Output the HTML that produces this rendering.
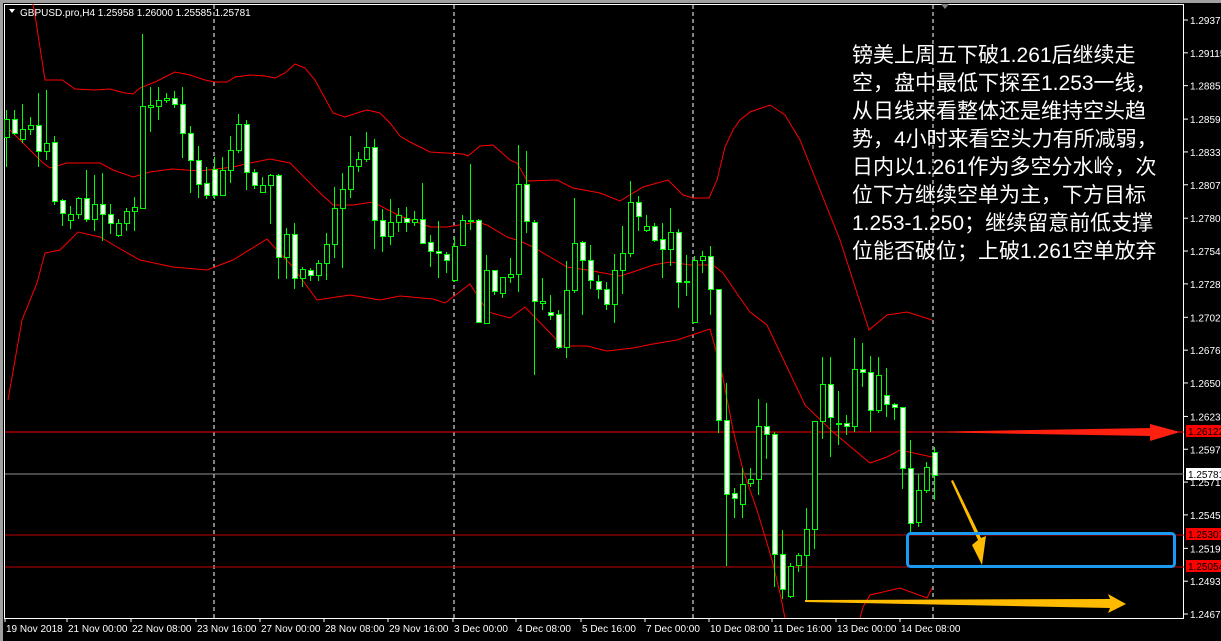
<!DOCTYPE html>
<html><head><meta charset="utf-8"><style>
html,body{margin:0;padding:0;background:#000;width:1221px;height:641px;overflow:hidden}
svg{display:block}
.ax{font-family:"Liberation Sans",sans-serif;font-size:10px;fill:#fff}
.cn{font-family:"Liberation Sans","Noto Sans CJK SC",sans-serif;font-size:21px;fill:#fff}
</style></head><body>
<svg id="s" width="1221" height="641" xmlns="http://www.w3.org/2000/svg">
<rect x="0" y="0" width="1221" height="641" fill="#000"/>
<rect x="0" y="0" width="1221" height="3" fill="#a0a0a0"/>
<rect x="0" y="0" width="3" height="641" fill="#a0a0a0"/>
<rect x="4.5" y="4.5" width="1179" height="614" fill="none" stroke="#fff" stroke-width="1"/>
<g stroke="#fff" stroke-dasharray="4,3" stroke-width="1">
<line x1="214" y1="5" x2="214" y2="618"/><line x1="454" y1="5" x2="454" y2="618"/>
<line x1="693" y1="5" x2="693" y2="618"/><line x1="933" y1="5" x2="933" y2="618"/>
</g>
<path d="M941 4 L949 4 L945 9 Z" fill="#808080"/>
<line x1="5" y1="474" x2="1184" y2="474" stroke="#909090"/>
<line x1="5" y1="535" x2="1184" y2="535" stroke="#c00000"/>
<line x1="5" y1="567" x2="1184" y2="567" stroke="#c00000"/>
<line x1="5" y1="432" x2="1184" y2="432" stroke="#ff0000"/>
<g fill="none" stroke="#ff0000" stroke-width="1">
<polyline points="33,4 35,15 45,80 58,80 62,80 75,89 95,90 110,89 125,93 133,94 140,88 155,82 175,72 190,75 205,80 215,82 227,82 235,77 250,75 265,76 275,78 285,73 295,64 305,68 315,80 333,113 345,117 360,112 367,110 380,113 390,123 400,136 410,142 430,152 463,154 468,156 480,146 493,145 510,160 517,163 525,177 527,181 557,180 573,188 600,193 620,201 643,187 668,180 683,195 693,198 709,198 717,180 725,147 733,130 740,120 750,112 770,105 785,115 800,140 820,190 840,240 869,330 887,315 907,312 932,320"/>
<polyline points="5,125 20,140 43,163 50,168 67,163 100,163 113,170 133,177 150,172 172,169 200,171 233,167 250,163 270,159 290,163 317,190 333,205 353,205 373,202 400,216 430,227 447,227 477,222 487,225 507,237 520,241 533,247 550,257 567,267 587,270 620,276 633,272 653,265 670,262 690,265 713,265 723,273 740,298 750,312 767,325 805,405 833,432 870,463 887,457 900,450 932,457"/>
<polyline points="8,400 22,320 37,283 45,253 60,250 78,232 100,237 117,247 140,260 173,267 207,270 233,260 267,239 277,250 293,267 317,300 350,295 380,300 400,296 433,299 445,303 470,284 488,312 510,318 525,307 555,338 560,346 587,346 607,351 633,348 653,344 677,340 710,329 715,347 722,373 733,430 743,470 757,510 772,560 780,593 785,618"/>
<polyline points="860,618 863,607 870,595 900,588 927,598 932,588"/>
</g>
<g id="c"></g>
<!-- arrows -->
<path d="M916 432 L1150 428 L1150 424 L1180 432 L1150 441 L1150 436 Z" fill="#ff2010"/>
<path d="M805 600 L1110 599 L1108 594 L1126 604 L1108 613 L1110 608 L805 602 Z" fill="#ffbb00"/>
<path d="M951 481 L978 540 L972 545 L982 565 L986 536 L981 538 L953 480 Z" fill="#ffbb00"/>
<rect x="907.5" y="533.5" width="267" height="33" rx="3" fill="none" stroke="#1a9af0" stroke-width="3"/>
<!-- title -->
<path d="M9 9 L15 9 L12 13 Z" fill="#fff"/>
<text x="20" y="16" class="ax">GBPUSD.pro,H4  1.25958 1.26000 1.25585 1.25781</text>
<!-- chinese -->
<g class="cn">
<text x="852" y="62">镑美上周五下破1.261后继续走</text>
<text x="852" y="90">空，盘中最低下探至1.253一线，</text>
<text x="852" y="118">从日线来看整体还是维持空头趋</text>
<text x="852" y="146">势，4小时来看空头力有所减弱，</text>
<text x="852" y="174">日内以1.261作为多空分水岭，次</text>
<text x="852" y="202">位下方继续空单为主，下方目标</text>
<text x="852" y="230">1.253-1.250；继续留意前低支撑</text>
<text x="852" y="258">位能否破位；上破1.261空单放弃</text>
</g>
<g id="ya" class="ax"></g>
<g id="xa" class="ax"></g>
</svg>
<script>
var NS="http://www.w3.org/2000/svg";
function el(t,a,p){var e=document.createElementNS(NS,t);for(var k in a)e.setAttribute(k,a[k]);p.appendChild(e);return e;}
var d="119,137,110,167,h|119,133,110,135,w|129,139,104,143,h|125,129,117,135,h|125,151,93,167,w|143,151,90,160,h|142,201,136,205,w|200,213,199,226,w|214,220,206,229,h|198,214,197,219,h|198,219,170,222,w|204,219,175,231,h|204,214,173,241,w|214,223,204,234,w|223,235,219,237,h|211,223,208,231,h|207,211,197,231,h|106,208,34,208,h|105,107,87,132,h|100,106,87,120,h|98,100,93,103,h|98,104,91,108,w|104,133,87,158,w|133,160,126,193,w|160,184,146,198,w|183,195,167,199,w|169,195,157,199,w|170,195,157,195,h|150,170,136,183,h|124,150,114,153,h|124,172,120,190,w|172,185,169,189,w|185,192,177,192,h|175,185,174,224,h|175,257,174,279,w|234,257,228,279,h|234,278,223,289,w|269,278,267,287,h|270,275,268,281,w|263,275,260,281,h|244,263,233,280,h|208,244,187,258,h|189,208,173,268,h|166,189,136,198,h|159,166,152,172,h|147,159,132,162,h|147,220,139,249,w|220,236,209,252,w|222,236,199,245,h|215,222,208,232,h|218,222,207,232,w|219,222,211,226,h|219,243,183,243,w|242,251,235,267,w|251,253,221,278,w|254,260,252,273,w|246,280,237,282,h|220,245,215,245,h|220,221,164,230,h|220,322,219,323,w|270,323,255,324,h|270,291,270,295,w|277,293,277,298,h|274,277,258,283,h|184,274,145,292,h|184,221,151,233,w|222,301,220,375,w|301,303,278,310,h|312,315,295,320,w|314,347,310,349,w|290,347,261,358,h|243,290,198,293,h|242,260,241,315,w|260,280,245,289,w|281,289,275,299,w|289,304,282,310,w|270,304,254,323,h|253,270,226,294,h|202,253,181,257,h|202,216,196,231,w|226,230,215,232,h|226,240,223,242,w|239,249,223,278,w|232,249,208,266,h|232,282,229,308,w|281,282,255,296,h|260,322,256,322,h|256,260,251,273,h|256,289,246,315,w|289,420,289,433,w|420,494,383,566,w|493,498,488,518,w|484,504,468,518,h|479,483,468,487,h|426,479,399,495,h|426,434,403,459,w|434,554,432,587,w|554,589,530,599,w|566,596,563,598,h|555,565,553,572,h|529,555,508,602,h|421,529,421,549,h|384,421,357,439,h|384,417,357,457,w|423,424,391,445,h|423,426,415,435,w|369,426,338,432,h|369,372,343,387,w|372,410,356,432,w|375,410,357,413,h|395,404,368,417,w|404,407,403,420,w|407,468,407,489,w|468,523,440,532,w|490,522,474,527,h|467,490,462,493,h|452,475,447,500,w".split("|");
var g=document.getElementById("c");
d.forEach(function(s,i){var a=s.split(",");var x=6+8*i;var bt=+a[0],bb=+a[1],wt=+a[2],wb=+a[3];
el("line",{x1:x+.5,x2:x+.5,y1:wt,y2:wb,stroke:"#00ff00","stroke-width":1},g);
var h=Math.max(bb-bt,1);
el("rect",{x:x-1.5,y:bt+.5,width:5,height:h,fill:a[4]=="w"?"#fff":"#000",stroke:"#00ff00","stroke-width":1},g);});
var ya=document.getElementById("ya");
var labs=["1.29375","1.29115","1.28855","1.28590","1.28330","1.28070","1.27805","1.27545","1.27285","1.27020","1.26760","1.26500","1.26235","1.25975","1.25715","1.25455","1.25190","1.24930","1.24670"];
labs.forEach(function(l){var p=parseFloat(l);var y=20+(1.29375-p)*12625;
el("line",{x1:1184,x2:1188,y1:y,y2:y,stroke:"#fff"},ya);
var t=el("text",{x:1190,y:y+4},ya);t.textContent=l;});
function tag(l,y,bg,fg){el("rect",{x:1186,y:y-6,width:35,height:12,fill:bg},ya);var t=el("text",{x:1188,y:y+4,fill:fg},ya);t.textContent=l;}
tag("1.26122",431,"#ff0000","#000");tag("1.25781",474,"#fff","#000");tag("1.25307",534,"#ff0000","#000");tag("1.25054",566,"#ff0000","#000");
var xa=document.getElementById("xa");
var xl=["19 Nov 2018","21 Nov 00:00","22 Nov 08:00","23 Nov 16:00","27 Nov 00:00","28 Nov 08:00","29 Nov 16:00","3 Dec 00:00","4 Dec 08:00","5 Dec 16:00","7 Dec 00:00","10 Dec 08:00","11 Dec 16:00","13 Dec 00:00","14 Dec 08:00"];
var xs=[5,67,131,196,260,324,388,453,516,581,645,709,772,836,900];
xl.forEach(function(l,i){el("line",{x1:xs[i],x2:xs[i],y1:618,y2:622,stroke:"#fff"},xa);var t=el("text",{x:xs[i]+1,y:632},xa);t.textContent=l;});
</script>
</body></html>
